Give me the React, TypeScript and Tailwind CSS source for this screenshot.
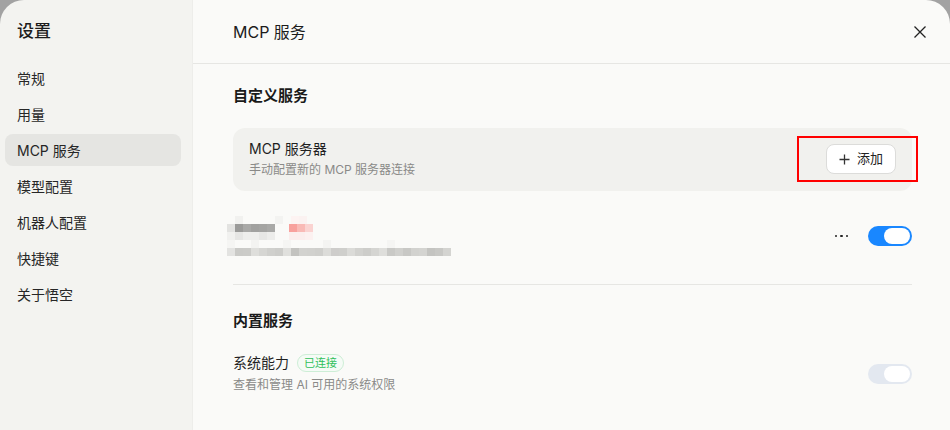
import React from "react";

const navItems = ["常规", "用量", "MCP 服务", "模型配置", "机器人配置", "快捷键", "关于悟空"];

// blurred (mosaic) server entry
const mosaicRows: { y: number; cells: [number, string][] }[] = [
  { y: 0, cells: [[8, "#f1f1ef"], [48, "#f3f3f1"], [64, "#fdf3f2"], [72, "#fbf2f1"]] },
  {
    y: 8,
    cells: [
      [0, "#e3e3e1"], [8, "#9b9b99"], [16, "#a9a9a7"], [24, "#a1a19f"], [32, "#a4a4a2"], [40, "#a9a9a7"],
      [62, "#f8a19d"], [70, "#f9bab6"], [78, "#fad3d1"],
    ],
  },
  {
    y: 16,
    cells: [
      [0, "#f1f1ef"], [8, "#e6e6e4"], [16, "#eeeeec"], [24, "#eeeeec"], [32, "#e7e7e5"], [40, "#ededeb"],
      [62, "#fbeeed"], [70, "#fbeeed"], [78, "#fcf1f0"],
    ],
  },
  { y: 24, cells: [[0, "#f5f5f3"], [24, "#f3f3f1"], [56, "#f5f5f3"], [96, "#f4f4f2"], [160, "#f5f5f3"]] },
  {
    y: 32,
    cells: [
      [0, "#e3e3e1"], [8, "#cacac7"], [16, "#cbcbc8"], [24, "#dededb"], [32, "#d6d6d3"], [40, "#d0d0cd"],
      [48, "#cdcdca"], [56, "#e0e0dd"], [64, "#c3c3c0"], [72, "#d2d2cf"], [80, "#d1d1ce"], [88, "#cfcfcc"],
      [96, "#dcdcd9"], [104, "#cecdcb"], [112, "#cfcfcc"], [120, "#dbdbd8"], [128, "#d2d2cf"], [136, "#cdcdca"],
      [144, "#d5d5d2"], [152, "#dededb"], [160, "#c9c9c6"], [168, "#d0d0cd"], [176, "#c8c8c5"], [184, "#d2d2cf"],
      [192, "#d4d4d1"], [200, "#c4c4c1"], [208, "#c8c8c5"], [216, "#d4d4d1"],
    ],
  },
];

function Mosaic() {
  return (
    <div className="relative w-[226px] h-[40px]">
      {mosaicRows.map((r) =>
        r.cells.map(([x, c]) => (
          <div
            key={`${r.y}-${x}`}
            className="absolute w-[8px] h-[8px]"
            style={{ left: x, top: r.y, background: c }}
          />
        ))
      )}
    </div>
  );
}

function Toggle({ on }: { on: boolean }) {
  return (
    <div
      className={`w-[44px] h-[20px] rounded-full flex items-center justify-end pr-[2px] ${
        on ? "bg-[#1987ff]" : "bg-[#e3e8f0]"
      }`}
    >
      <div className="w-[26px] h-[16px] rounded-full bg-white" />
    </div>
  );
}

export default function App() {
  return (
    <div
      className="w-[950px] h-[430px] bg-[#a2a2a2] overflow-hidden"
      style={{ fontFamily: 'Inter, "Noto Sans CJK SC", sans-serif' }}
    >
      <div className="w-full h-full rounded-t-[24px] overflow-hidden flex">
        {/* sidebar */}
        <div className="w-[193px] shrink-0 bg-[#f3f3f0] border-r border-[#ededea] pl-[5px] pr-[11px] pt-[20px]">
          <div className="px-3 text-[17px] leading-[22px] text-[#1c1c1c] font-medium">设置</div>
          <div className="mt-[20px] flex flex-col gap-[4px]">
            {navItems.map((n) => (
              <div
                key={n}
                className={`h-[32px] px-3 flex items-center rounded-[8px] text-[14px] text-[#262626] ${
                  n === "MCP 服务" ? "bg-[#e5e5e2]" : ""
                }`}
              >
                {n}
              </div>
            ))}
          </div>
        </div>

        {/* main */}
        <div className="flex-1 bg-[#fafaf8] flex flex-col">
          <div className="h-[64px] shrink-0 border-b border-[#e6e6e3] pl-10 pr-[23px] flex items-center justify-between">
            <div className="text-[16px] text-[#1c1c1c]">MCP 服务</div>
            <svg width="14" height="14" viewBox="0 0 14 14" fill="none" stroke="#222" strokeWidth="1.3">
              <path d="M1.5 1.5 L12.5 12.5 M12.5 1.5 L1.5 12.5" />
            </svg>
          </div>

          <div className="pl-10 pr-[38px] pt-[22px]">
            <div className="text-[15px] leading-[20px] font-semibold text-[#1a1a1a]">自定义服务</div>

            <div className="relative mt-[22px] bg-[#f1f1ee] rounded-[12px] pl-4 pr-4 pt-[11px] pb-[12px] flex items-center justify-between">
              <div className="flex flex-col gap-[2px]">
                <div className="text-[14px] leading-[20px] text-[#1f1f1f]">MCP 服务器</div>
                <div className="text-[12px] leading-[18px] text-[#8a8a88]">手动配置新的 MCP 服务器连接</div>
              </div>
              <div className="w-[70px] h-[30px] rounded-[8px] bg-white border border-[#dcdcda] flex items-center justify-center gap-[7px] text-[13px] text-[#222]">
                <svg width="11" height="11" viewBox="0 0 11 11" stroke="#333" strokeWidth="1.3">
                  <path d="M5.5 0.5 V10.5 M0.5 5.5 H10.5" />
                </svg>
                添加
              </div>
              <div className="absolute top-[8px] -right-[6px] w-[121px] h-[46px] border-2 border-[#ff0000]" />
            </div>

            <div className="pt-[23px] pb-[26px] h-[93px] flex items-center justify-between">
              <div className="-ml-[6px]">
                <Mosaic />
              </div>
              <div className="flex items-center gap-[20px]">
                <div className="flex gap-[3px]">
                  <span className="w-[2.5px] h-[2.5px] rounded-full bg-[#222]" />
                  <span className="w-[2.5px] h-[2.5px] rounded-full bg-[#222]" />
                  <span className="w-[2.5px] h-[2.5px] rounded-full bg-[#222]" />
                </div>
                <Toggle on />
              </div>
            </div>

            <div className="border-t border-[#e6e6e3] pt-[26px]">
              <div className="text-[15px] leading-[20px] font-semibold text-[#1a1a1a]">内置服务</div>
              <div className="mt-[22px] flex items-center justify-between">
                <div className="flex flex-col gap-[3px]">
                  <div className="flex items-center gap-[8px]">
                    <span className="text-[14px] leading-[20px] text-[#1f1f1f]">系统能力</span>
                    <span className="h-[18px] px-[6px] rounded-full border border-[#cdeed6] bg-[#f5fbf6] text-[11px] leading-[16px] text-[#2fbf5a] flex items-center">
                      已连接
                    </span>
                  </div>
                  <div className="text-[12px] leading-[18px] text-[#8a8a88]">查看和管理 AI 可用的系统权限</div>
                </div>
                <Toggle on={false} />
              </div>
            </div>
          </div>
        </div>
      </div>
    </div>
  );
}
